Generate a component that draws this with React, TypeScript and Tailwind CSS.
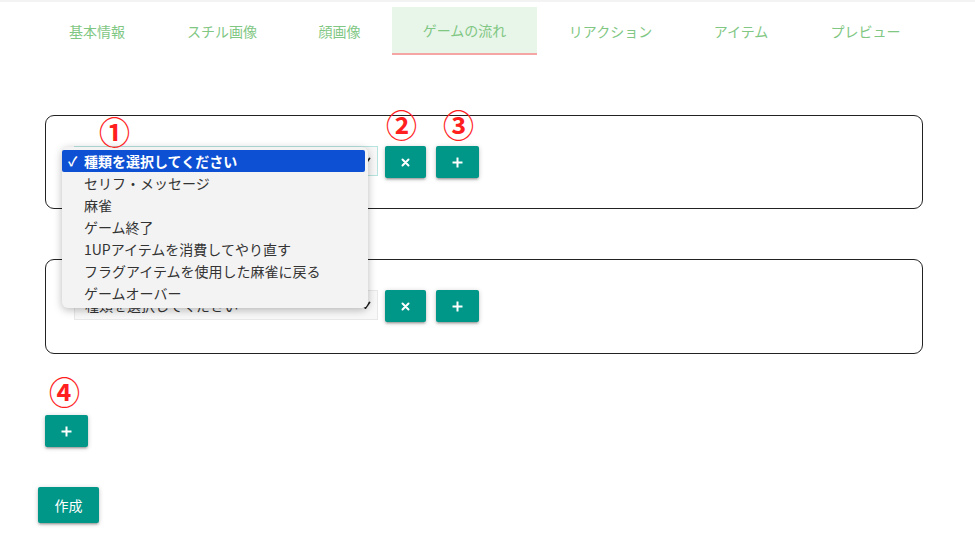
import React from "react";

const font = { fontFamily: '"Noto Sans CJK JP", "Noto Sans", sans-serif' };

const tabs: { label: string; w: string; active?: boolean }[] = [
  { label: "基本情報", w: "w-[120px]" },
  { label: "スチル画像", w: "w-[130px]" },
  { label: "顔画像", w: "w-[105px]" },
  { label: "ゲームの流れ", w: "w-[145px]", active: true },
  { label: "リアクション", w: "w-[147px]" },
  { label: "アイテム", w: "w-[114px]" },
  { label: "プレビュー", w: "w-[135px]" },
];

const options = [
  "セリフ・メッセージ",
  "麻雀",
  "ゲーム終了",
  "1UPアイテムを消費してやり直す",
  "フラグアイテムを使用した麻雀に戻る",
  "ゲームオーバー",
];

function Chevron() {
  return (
    <svg width="9" height="8" viewBox="0 0 9 8" className="shrink-0">
      <path d="M1.5 5 L3.5 7 L7.5 1.5" fill="none" stroke="#222" strokeWidth="1.8" strokeLinecap="round" strokeLinejoin="round" />
    </svg>
  );
}

function TealButton({ children, className = "" }: { children: React.ReactNode; className?: string }) {
  return (
    <button
      className={
        "flex items-center justify-center rounded-[2px] bg-[#009688] text-white shadow-[0_2px_2px_0_rgba(0,0,0,0.14),0_3px_1px_-2px_rgba(0,0,0,0.12),0_1px_5px_0_rgba(0,0,0,0.2)] " +
        className
      }
    >
      {children}
    </button>
  );
}

function Times() {
  return (
    <svg width="9" height="9" viewBox="0 0 9 9">
      <path d="M1.5 1.5 L7.5 7.5 M7.5 1.5 L1.5 7.5" stroke="white" strokeWidth="2" strokeLinecap="round" />
    </svg>
  );
}

function Plus() {
  return (
    <svg width="11" height="11" viewBox="0 0 11 11">
      <path d="M5.5 0.5 V10.5 M0.5 5.5 H10.5" stroke="white" strokeWidth="2" />
    </svg>
  );
}

function Row({ focused }: { focused?: boolean }) {
  return (
    <div className="flex items-start">
      <div
        className={
          "flex h-[30px] w-[304px] items-center justify-between border bg-[#f8f8f8] pl-[10px] pr-[6px] text-[14px] text-[#333] " +
          (focused ? "border-[#b7e4df]" : "border-[#e8e8e8]")
        }
      >
        <span>種類を選択してください</span>
        <Chevron />
      </div>
      <TealButton className="ml-[7px] h-[32px] w-[41px]">
        <Times />
      </TealButton>
      <TealButton className="ml-[10px] h-[32px] w-[43px]">
        <Plus />
      </TealButton>
    </div>
  );
}

function Circled({ children, className = "" }: { children: React.ReactNode; className?: string }) {
  return (
    <span
      className={"absolute text-[31px] font-bold leading-none text-[#ff1f1f] " + className}
      style={font}
    >
      {children}
    </span>
  );
}

export default function App() {
  return (
    <div className="relative min-h-[551px] w-[975px] overflow-hidden bg-white" style={font}>
      <div className="h-[2px] bg-[#f3f3f3]" />
      <div className="mt-[5px] flex pl-[37px]">
        {tabs.map((t) => (
          <div
            key={t.label}
            className={
              "flex h-[48px] items-center justify-center text-[14px] text-[#7fc783] " +
              t.w +
              (t.active ? " border-b-2 border-[#f6a5a5] bg-[#e8f5e9]" : "")
            }
          >
            {t.label}
          </div>
        ))}
      </div>

      <div className="ml-[45px] mt-[60px] w-[878px]">
        <div className="h-[94px] rounded-[9px] border border-[#222] pl-[28px] pt-[30px]">
          <Row focused />
        </div>
        <div className="mt-[50px] h-[95px] rounded-[9px] border border-[#222] pl-[28px] pt-[30px]">
          <Row />
        </div>
        <TealButton className="mt-[61px] h-[32px] w-[43px]">
          <Plus />
        </TealButton>
      </div>

      <TealButton className="ml-[38px] mt-[40px] h-[36px] w-[61px] text-[14px]">作成</TealButton>

      {/* open select dropdown */}
      <div className="absolute left-[62px] top-[147px] w-[306px] rounded-[6px] bg-[#f3f3f3] pb-[4px] pt-[3px] pr-[3px] shadow-[0_2px_8px_rgba(0,0,0,0.28)]">
        <div className="flex h-[22px] items-center rounded-[2px] bg-[#0d50d4] pl-[6px] text-[14px] font-bold text-white">
          <span className="w-[16px] text-[13px]">✓</span>
          <span>種類を選択してください</span>
        </div>
        {options.map((o) => (
          <div key={o} className="flex h-[22px] items-center pl-[22px] text-[14px] text-[#333]">
            {o}
          </div>
        ))}
      </div>

      <Circled className="left-[99px] top-[115px]">①</Circled>
      <Circled className="left-[386px] top-[108px]">②</Circled>
      <Circled className="left-[443px] top-[108px]">③</Circled>
      <Circled className="left-[49px] top-[375px]">④</Circled>
    </div>
  );
}
